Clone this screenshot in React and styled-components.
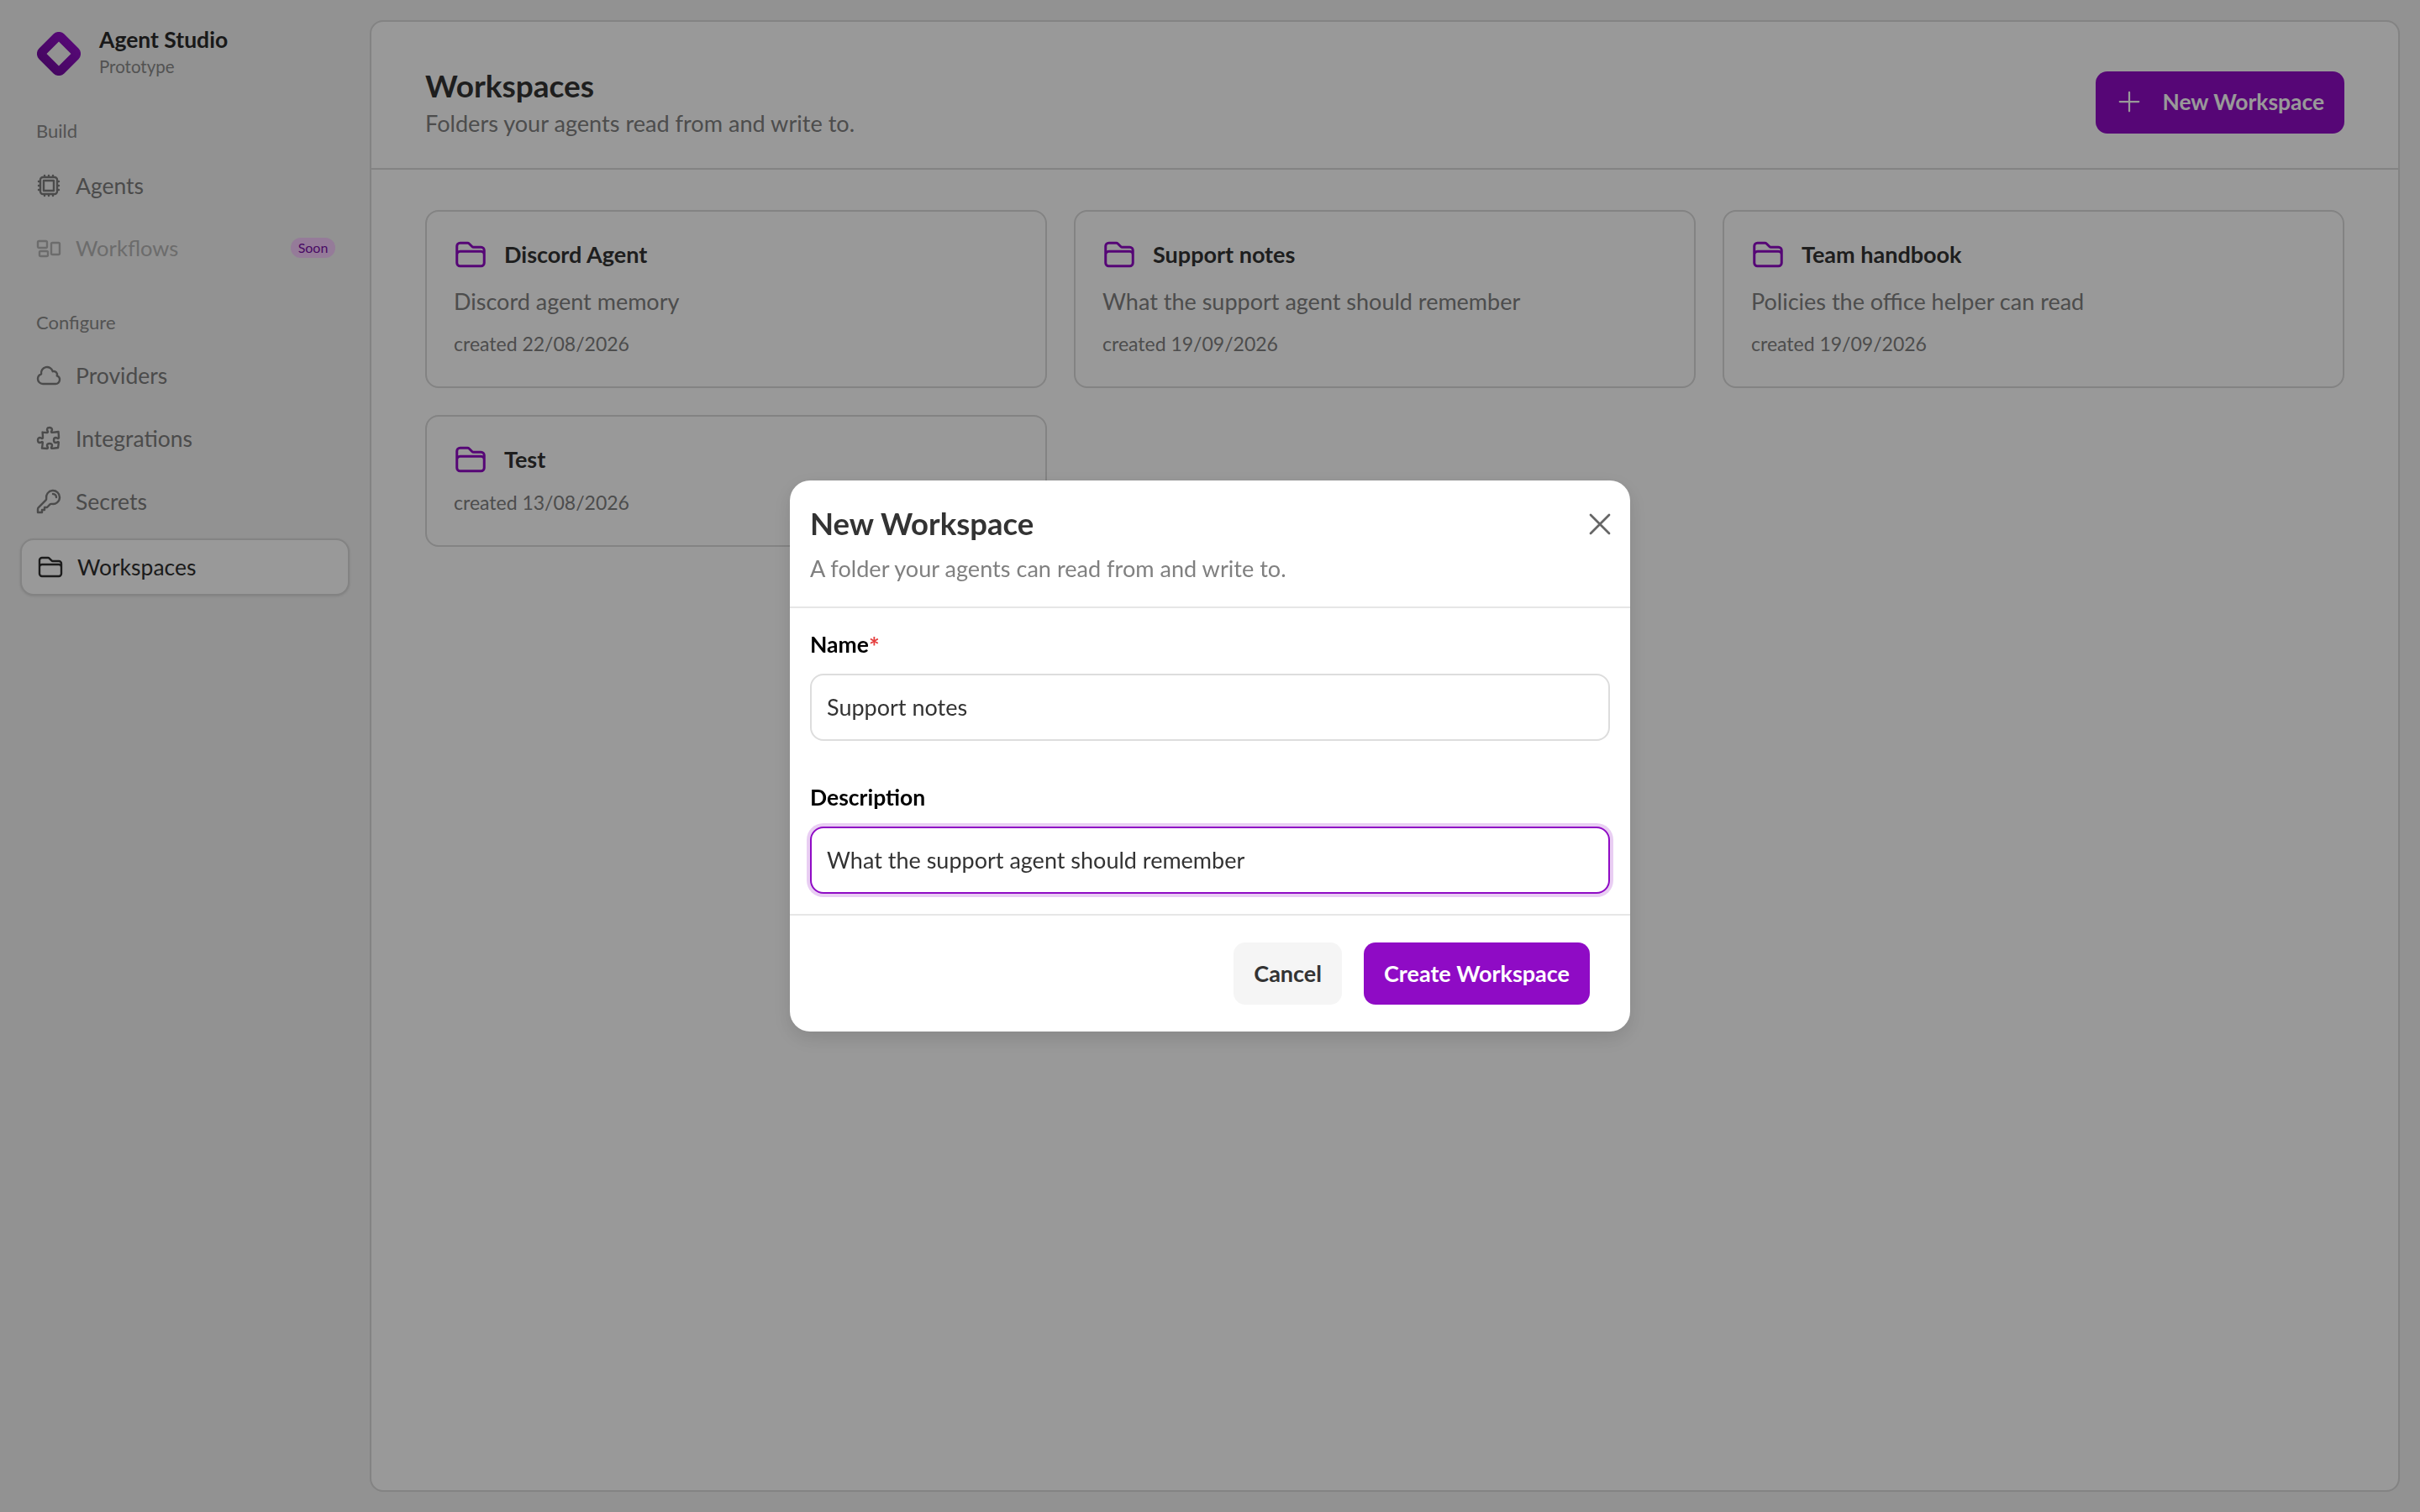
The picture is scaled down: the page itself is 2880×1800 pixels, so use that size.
import React from "react";
import styled, { createGlobalStyle } from "styled-components";
import {
  HiOutlineCpuChip,
  HiOutlineRectangleGroup,
  HiOutlineCloud,
  HiOutlinePuzzlePiece,
  HiOutlineKey,
  HiOutlineFolder,
  HiOutlinePlus,
  HiOutlineXMark,
} from "react-icons/hi2";

const Global = createGlobalStyle`
  * { box-sizing: border-box; }
  html, body { margin: 0; height: 100%; }
  body { font-family: "Lato", "Noto Sans", sans-serif; background: #f3f3f3; }
`;

const Shell = styled.div`
  display: grid;
  grid-template-columns: 440px 1fr;
  height: 1800px;
  padding: 24px 24px 24px 0;
  background: #f3f3f3;
`;

const Sidebar = styled.aside`
  margin-top: -24px;
  padding: 38px 24px 0;
  display: flex;
  flex-direction: column;
`;

const Brand = styled.div`
  display: flex;
  align-items: center;
  gap: 22px;
  padding-left: 20px;
  height: 52px;
`;

const BrandText = styled.div`
  display: flex;
  flex-direction: column;
`;

const BrandName = styled.div`
  font-size: 26.5px;
  line-height: 37px;
  font-weight: 700;
  color: #2b2b2b;
  margin-top: -8px;
`;

const BrandSub = styled.div`
  font-size: 20.5px;
  line-height: 26px;
  color: #8a8a8a;
`;

const SectionLabel = styled.div`
  font-size: 22px;
  line-height: 28px;
  color: #8a8a8a;
  padding-left: 19px;
  margin-top: ${(p) => p.$top}px;
  margin-bottom: ${(p) => p.$bottom}px;
`;

const Nav = styled.nav`
  display: flex;
  flex-direction: column;
  gap: ${(p) => p.$gap}px;
`;

const NavRow = styled.div`
  height: ${(p) => (p.$active ? 68 : 66)}px;
  margin-top: ${(p) => (p.$active ? 2 : 0)}px;
  display: flex;
  align-items: center;
  gap: 16px;
  padding: 0 18px;
  border: ${(p) => (p.$active ? "2px solid #dadada" : "none")};
  border-radius: 16px;
  background: ${(p) => (p.$active ? "#ffffff" : "transparent")};
  box-shadow: ${(p) => (p.$active ? "0 1px 3px rgba(0,0,0,0.1)" : "none")};
  color: ${(p) => (p.$active ? "#2f2f2f" : p.$muted ? "#b5b5b5" : "#7e7e7e")};
  font-size: ${(p) => (p.$muted ? 25.6 : 26.5)}px;
  & > svg { flex: none; stroke-width: 1.8; }
`;

const NavText = styled.span`
  flex: 1;
`;

const Badge = styled.span`
  font-size: 16px;
  line-height: 24px;
  width: 53px;
  text-align: center;
  border-radius: 12px;
  background: #f8cdff;
  color: #7a10a8;
  margin-right: -1px;
`;

const Panel = styled.main`
  background: #ffffff;
  border: 2px solid #dadada;
  border-radius: 16px;
  display: flex;
  flex-direction: column;
`;

const PanelHeader = styled.header`
  display: flex;
  justify-content: space-between;
  align-items: center;
  padding: 54px 64px 37px;
  border-bottom: 2px solid #dadada;
`;

const PageTitle = styled.h1`
  margin: 0 0 7px;
  font-size: 37px;
  line-height: 44px;
  font-weight: 700;
  color: #333333;
`;

const PageSub = styled.p`
  margin: 0;
  font-size: 27.1px;
  line-height: 32px;
  color: #808080;
`;

const PrimaryButton = styled.button`
  display: flex;
  align-items: center;
  gap: ${(p) => p.$gap || 0}px;
  height: 74px;
  padding: 0 ${(p) => p.$right || 24}px 1px ${(p) => p.$left || 24}px;
  border: none;
  border-radius: 14px;
  background: #8f0bc5;
  color: #ffffff;
  font: 700 ${(p) => p.$size || 27}px "Lato", sans-serif;
`;

const Grid = styled.section`
  display: grid;
  grid-template-columns: repeat(3, 1fr);
  gap: 32px;
  padding: 48px 64px;
`;

const Card = styled.article`
  display: flex;
  flex-direction: column;
  border: 2px solid #dadada;
  border-radius: 16px;
  padding: 31px 32px 38px;
`;

const CardHead = styled.div`
  display: flex;
  align-items: center;
  gap: 20px;
  height: 40px;
  color: #8f0bc5;
  & > svg { stroke-width: 1.8; }
`;

const CardTitle = styled.span`
  font-size: 27px;
  font-weight: 700;
  color: #333333;
  padding-bottom: 1px;
`;

const CardDesc = styled.p`
  margin: 19px 0 2px;
  font-size: 27px;
  line-height: 34px;
  color: #808080;
`;

const CardDate = styled.div`
  margin-top: 18px;
  font-size: 23px;
  line-height: 26px;
  color: #808080;
`;

const Overlay = styled.div`
  position: fixed;
  inset: 0;
  background: rgba(0, 0, 0, 0.4);
  display: flex;
  align-items: center;
  justify-content: center;
`;

const Modal = styled.div`
  width: 1000px;
  height: 656px;
  background: #ffffff;
  border-radius: 24px;
  box-shadow: 0 8px 24px rgba(0, 0, 0, 0.12);
  display: flex;
  flex-direction: column;
`;

const ModalHeader = styled.div`
  display: flex;
  justify-content: space-between;
  padding: 29px 14px 29px 24px;
  border-bottom: 2px solid #e6e6e6;
`;

const ModalTitle = styled.h2`
  margin: 0 0 16px;
  font-size: 36.5px;
  line-height: 44px;
  font-weight: 700;
  color: #333333;
`;

const ModalSub = styled.p`
  margin: 0;
  font-size: 27.1px;
  line-height: 32px;
  color: #808080;
`;

const CloseButton = styled.button`
  width: 44px;
  height: 44px;
  margin-top: 1px;
  padding: 0;
  border: none;
  background: none;
  color: #666666;
  display: flex;
`;

const ModalBody = styled.div`
  padding: 27px 24px 24px;
  display: flex;
  flex-direction: column;
  border-bottom: 2px solid #e6e6e6;
`;

const FieldLabel = styled.label`
  font-size: 26.5px;
  line-height: 32px;
  font-weight: 700;
  color: #000000;
  margin-top: ${(p) => p.$top || 0}px;
  margin-bottom: 19px;
`;

const Required = styled.span`
  color: #e53e3e;
  font-size: 30px;
  line-height: 20px;
  vertical-align: -4px;
`;

const TextInput = styled.input`
  height: 80px;
  width: 100%;
  padding: 0 18px 2px;
  border-radius: 16px;
  border: 2px solid ${(p) => (p.$focus ? "#8f0bc5" : "#dddddd")};
  box-shadow: ${(p) => (p.$focus ? "0 0 0 4px rgba(143, 11, 197, 0.2)" : "none")};
  outline: none;
  font: 400 27px "Lato", sans-serif;
  color: #333333;
  background: #ffffff;
`;

const ModalFooter = styled.div`
  display: flex;
  justify-content: flex-end;
  gap: 26px;
  padding: 32px 48px;
`;

const SecondaryButton = styled.button`
  height: 74px;
  padding: 0 24px 1px;
  border: none;
  border-radius: 14px;
  background: #f5f5f5;
  color: #333333;
  font: 700 27px "Lato", sans-serif;
`;

const Logo = () => (
  <svg width="52" height="52" viewBox="0 0 52 52" style={{ flex: "none" }}>
    <defs>
      <linearGradient id="lg" x1="1" y1="0" x2="0" y2="1">
        <stop offset="0" stopColor="#9a10d2" />
        <stop offset="1" stopColor="#6a0a95" />
      </linearGradient>
    </defs>
    <path
      fill="url(#lg)"
      fillRule="evenodd"
      d="M19.6 2.6a9 9 0 0 1 12.8 0L49.4 19.6a9 9 0 0 1 0 12.8L32.4 49.4a9 9 0 0 1-12.8 0L2.6 32.4a9 9 0 0 1 0-12.8ZM26 11.5 11.5 26 26 40.5 40.5 26Z"
    />
  </svg>
);

const cards = [
  { name: "Discord Agent", desc: "Discord agent memory", date: "22/08/2026" },
  { name: "Support notes", desc: "What the support agent should remember", date: "19/09/2026" },
  { name: "Team handbook", desc: "Policies the office helper can read", date: "19/09/2026" },
  { name: "Test", date: "13/08/2026" },
];

export default function App() {
  return (
    <>
      <Global />
      <Shell>
        <Sidebar>
          <Brand>
            <Logo />
            <BrandText>
              <BrandName>Agent Studio</BrandName>
              <BrandSub>Prototype</BrandSub>
            </BrandText>
          </Brand>
          <SectionLabel $top={52} $bottom={18}>Build</SectionLabel>
          <Nav $gap={8}>
            <NavRow><HiOutlineCpuChip size={32} /><NavText>Agents</NavText></NavRow>
            <NavRow $muted><HiOutlineRectangleGroup size={32} /><NavText>Workflows</NavText><Badge>Soon</Badge></NavRow>
          </Nav>
          <SectionLabel $top={42} $bottom={16}>Configure</SectionLabel>
          <Nav $gap={9}>
            <NavRow><HiOutlineCloud size={32} /><NavText>Providers</NavText></NavRow>
            <NavRow><HiOutlinePuzzlePiece size={32} /><NavText>Integrations</NavText></NavRow>
            <NavRow><HiOutlineKey size={32} /><NavText>Secrets</NavText></NavRow>
            <NavRow $active><HiOutlineFolder size={32} /><NavText>Workspaces</NavText></NavRow>
          </Nav>
        </Sidebar>
        <Panel>
          <PanelHeader>
            <div>
              <PageTitle>Workspaces</PageTitle>
              <PageSub>Folders your agents read from and write to.</PageSub>
            </div>
            <PrimaryButton $left={22} $gap={21} $size={26.4}>
              <HiOutlinePlus size={36} />
              New Workspace
            </PrimaryButton>
          </PanelHeader>
          <Grid>
            {cards.map((c) => (
              <Card key={c.name}>
                <CardHead>
                  <HiOutlineFolder size={40} />
                  <CardTitle>{c.name}</CardTitle>
                </CardHead>
                {c.desc && <CardDesc>{c.desc}</CardDesc>}
                <CardDate>created {c.date}</CardDate>
              </Card>
            ))}
          </Grid>
        </Panel>
      </Shell>
      <Overlay>
        <Modal>
          <ModalHeader>
            <div>
              <ModalTitle>New Workspace</ModalTitle>
              <ModalSub>A folder your agents can read from and write to.</ModalSub>
            </div>
            <CloseButton aria-label="Close"><HiOutlineXMark size={44} /></CloseButton>
          </ModalHeader>
          <ModalBody>
            <FieldLabel>Name<Required>*</Required></FieldLabel>
            <TextInput readOnly value="Support notes" />
            <FieldLabel $top={51}>Description</FieldLabel>
            <TextInput $focus readOnly value="What the support agent should remember" />
          </ModalBody>
          <ModalFooter>
            <SecondaryButton>Cancel</SecondaryButton>
            <PrimaryButton>Create Workspace</PrimaryButton>
          </ModalFooter>
        </Modal>
      </Overlay>
    </>
  );
}
